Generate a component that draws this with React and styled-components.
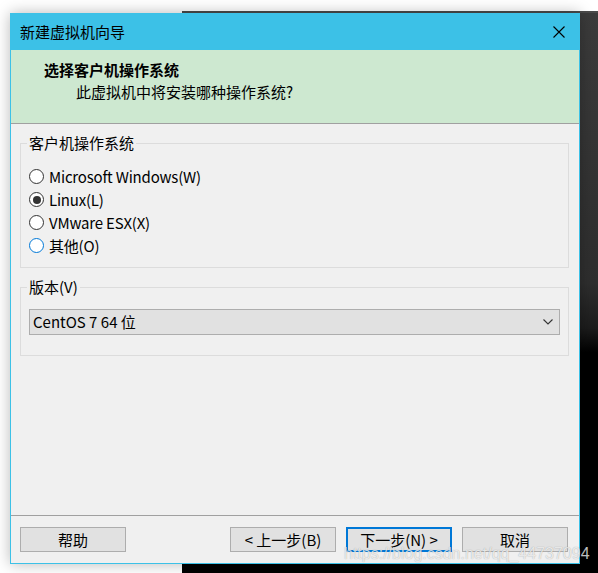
import React from "react";
import styled, { createGlobalStyle } from "styled-components";

const Global = createGlobalStyle`
  html, body { margin: 0; padding: 0; background: #ffffff; }
  body { font-family: "Noto Sans CJK SC", "Noto Sans", sans-serif; }
  * { box-sizing: border-box; }
`;

const Desktop = styled.div`
  position: relative;
  width: 598px;
  height: 573px;
  overflow: hidden;
  background: #ffffff;
`;

const BackWindow = styled.div`
  position: absolute;
  left: 182px;
  top: 11px;
  right: -20px;
  bottom: -20px;
  border-top: 2px solid #4a4a4a;
  background: linear-gradient(
    180deg,
    #3b3b3b 0px,
    #2e2e2e 270px,
    #1c1c1c 315px,
    #000000 340px,
    #000000 100%
  );
`;

const Dialog = styled.div`
  position: absolute;
  left: 10px;
  top: 13px;
  width: 570px;
  height: 551px;
  border: 1px solid #3cc1e7;
  background: #f0f0f0;
  display: flex;
  flex-direction: column;
  box-shadow: 0 0 14px rgba(0, 0, 0, 0.28);
  font-size: 15px;
  color: #000;
`;

const TitleBar = styled.div`
  height: 36px;
  background: #3cc1e7;
  display: flex;
  align-items: center;
  justify-content: space-between;
  padding: 0 14px 0 9px;
`;

const TitleText = styled.span`
  font-size: 15px;
  line-height: 20px;
`;

const CloseIcon = styled.svg`
  width: 12px;
  height: 12px;
  display: block;
`;

const Header = styled.div`
  height: 74px;
  background: #cde8d0;
  border-bottom: 1px solid #a0a0a0;
  padding: 10px 0 0 33px;
  display: flex;
  flex-direction: column;
  gap: 2px;
`;

const HeaderTitle = styled.div`
  font-weight: bold;
  line-height: 20px;
`;

const HeaderSub = styled.div`
  line-height: 20px;
  padding-left: 32px;
`;

const Body = styled.div`
  flex: 1;
  padding: 10px 10px 0 9px;
  display: flex;
  flex-direction: column;
  gap: 10px;
`;

const Group = styled.fieldset`
  margin: 0;
  border: 1px solid #dcdcdc;
  padding: ${(p) => p.$pad};
`;

const Legend = styled.legend`
  padding: 0 2px;
  margin-left: -2px;
  line-height: 18px;
  font-size: 15px;
`;

const RadioList = styled.div`
  display: flex;
  flex-direction: column;
`;

const RadioRow = styled.label`
  height: 23px;
  display: flex;
  align-items: center;
  gap: 5px;
  line-height: 20px;
  letter-spacing: -0.2px;
`;

const Circle = styled.span`
  width: 15px;
  height: 15px;
  border-radius: 50%;
  border: 1px solid ${(p) => (p.$focus ? "#0078d7" : "#333333")};
  background: #ffffff;
  display: flex;
  align-items: center;
  justify-content: center;
  flex: none;

  &::after {
    content: "";
    width: 8px;
    height: 8px;
    border-radius: 50%;
    background: ${(p) => (p.$checked ? "#333333" : "transparent")};
  }
`;

const Select = styled.div`
  height: 26px;
  border: 1px solid #adadad;
  background: #e1e1e1;
  display: flex;
  align-items: center;
  justify-content: space-between;
  padding: 0 6px 0 3px;
  line-height: 20px;
`;

const Chevron = styled.svg`
  width: 10px;
  height: 6px;
  display: block;
`;

const Footer = styled.div`
  border-top: 1px solid #a0a0a0;
  padding: 11px 11px 11px 9px;
  display: flex;
  justify-content: space-between;
`;

const ButtonGroup = styled.div`
  display: flex;
  gap: 10px;
`;

const Button = styled.button`
  width: 106px;
  height: 25px;
  margin: 0;
  padding: 0;
  font-family: inherit;
  font-size: 15px;
  line-height: 20px;
  color: #000;
  background: #e1e1e1;
  border: ${(p) => (p.$primary ? "2px solid #0078d7" : "1px solid #adadad")};
  display: flex;
  align-items: center;
  justify-content: center;
`;

const Watermark = styled.span`
  position: absolute;
  left: 344px;
  top: 544px;
  font-family: "Liberation Sans", Arial, sans-serif;
  font-size: 16px;
  line-height: 20px;
  color: rgba(255, 255, 255, 0.75);
  text-shadow: 0 0 1px rgba(0, 0, 0, 0.35);
  white-space: nowrap;
`;

const options = [
  { label: "Microsoft Windows(W)" },
  { label: "Linux(L)", checked: true },
  { label: "VMware ESX(X)" },
  { label: "其他(O)", focus: true },
];

export default function App() {
  return (
    <>
      <Global />
      <Desktop>
        <BackWindow />
        <Dialog>
          <TitleBar>
            <TitleText>新建虚拟机向导</TitleText>
            <CloseIcon viewBox="0 0 12 12">
              <path d="M0.5 0.5 L11.5 11.5 M11.5 0.5 L0.5 11.5" stroke="#000" strokeWidth="1.1" fill="none" />
            </CloseIcon>
          </TitleBar>
          <Header>
            <HeaderTitle>选择客户机操作系统</HeaderTitle>
            <HeaderSub>此虚拟机中将安装哪种操作系统?</HeaderSub>
          </Header>
          <Body>
            <Group $pad="13px 8px 10px 8px">
              <Legend>客户机操作系统</Legend>
              <RadioList>
                {options.map((o) => (
                  <RadioRow key={o.label}>
                    <Circle $checked={o.checked} $focus={o.focus} />
                    <span>{o.label}</span>
                  </RadioRow>
                ))}
              </RadioList>
            </Group>
            <Group $pad="13px 8px 20px 8px">
              <Legend>版本(V)</Legend>
              <Select>
                <span>CentOS 7 64 位</span>
                <Chevron viewBox="0 0 10 6">
                  <path d="M0.5 0.5 L5 5 L9.5 0.5" stroke="#333" strokeWidth="1.1" fill="none" />
                </Chevron>
              </Select>
            </Group>
          </Body>
          <Footer>
            <Button>帮助</Button>
            <ButtonGroup>
              <Button>&lt; 上一步(B)</Button>
              <Button $primary>下一步(N) &gt;</Button>
              <Button>取消</Button>
            </ButtonGroup>
          </Footer>
        </Dialog>
        <Watermark>https://blog.csdn.net/qq_44737094</Watermark>
      </Desktop>
    </>
  );
}
